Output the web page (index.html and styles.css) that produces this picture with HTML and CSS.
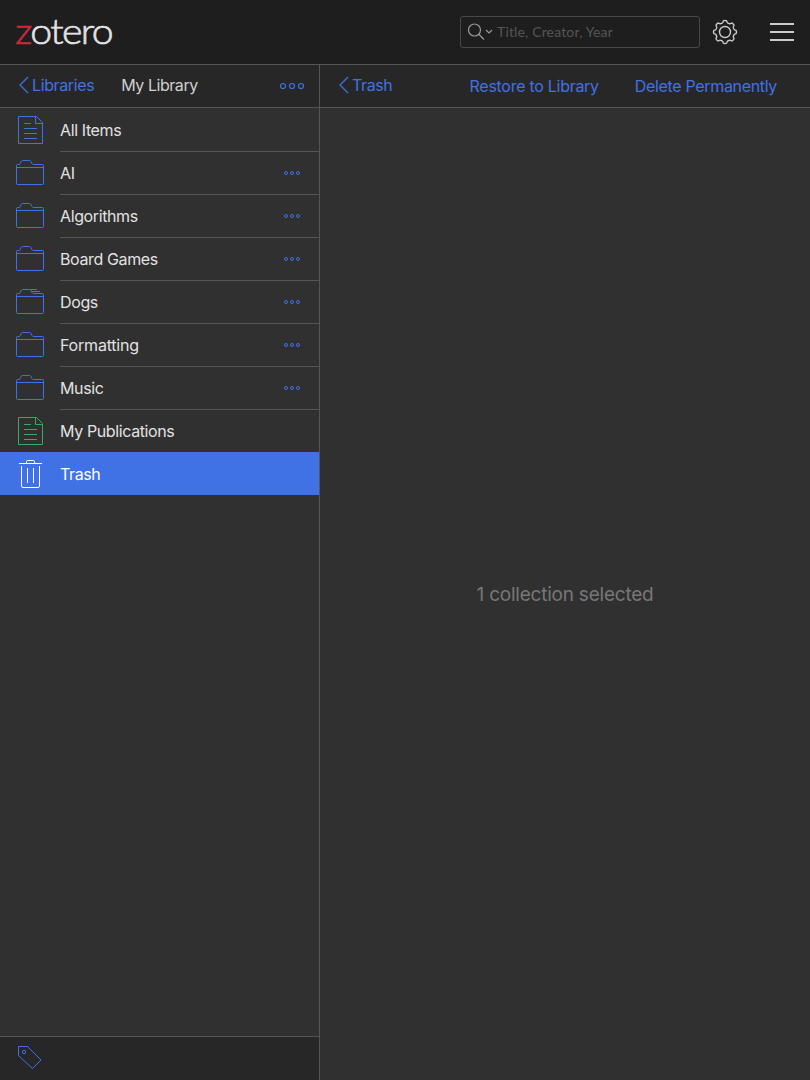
FILE: index.html
```html
<!DOCTYPE html>
<html lang="en">
<head>
<meta charset="utf-8">
<title>Zotero | Trash</title>
<link rel="stylesheet" href="styles.css">
</head>
<body>
<svg class="defs" width="0" height="0">
  <symbol id="doc" viewBox="0 0 28 28"><path d="M2.5.5h18l6 6v21h-24zM19.5.5v7h7M8 7.5h7M8 12.5h13M8 17.5h13M8 22.5h13"/></symbol>
  <symbol id="folder" viewBox="0 0 28 28"><path d="M.5 8.500h27M1.500 25.500Q.5 25.500 .5 24.500V6.500Q.5 5.500 1.500 5.500H3Q4 5.500 4.300 4.500L5 2.700Q5.500 1.500 6.500 1.500H13.500Q14.500 1.500 15 2.500L16 4.500Q16.500 5.500 17.500 5.500H26.500Q27.500 5.500 27.500 6.500V24.500Q27.500 25.500 26.500 25.500Z"/></symbol>
  <symbol id="folders" viewBox="0 0 28 28"><use href="#folder"/><path d="M14 1.500h7M16 3.500h8"/></symbol>
  <symbol id="trash" viewBox="0 0 28 28"><path d="M3 3.500h23M10.500 3V1.500Q10.500.5 11.500.5H17.500Q18.500.5 18.500 1.500V3M5.500 6V26Q5.500 27.500 7 27.500H22Q23.500 27.500 23.500 26V6M11.500 8v15M17.500 8v15"/></symbol>
  <symbol id="dots" viewBox="0 0 16 6"><circle cx="2" cy="3" r="1.500"/><circle cx="8" cy="3" r="1.500"/><circle cx="14" cy="3" r="1.500"/></symbol>
  <symbol id="back" viewBox="0 0 10 18"><path d="M9 1L1 9l8 8"/></symbol>
</svg>
<header class="navbar">
  <h1 class="brand"><span class="brand-z">z</span>otero</h1>
  <div class="search">
    <svg class="search-icon" width="25" height="18" viewBox="0 0 25 18"><circle cx="6.500" cy="7" r="6"/><path d="M11 11.500l5 5M18 7l3 3 3-3"/></svg>
    <span class="placeholder">Title, Creator, Year</span>
  </div>
  <svg class="gear" width="26" height="26" viewBox="-13 -13 26 26"><circle r="5.500"/><path id="gear-outline" d=""/></svg>
  <svg class="menu" width="24" height="18" viewBox="0 0 24 18"><path d="M0 1h24M0 9h24M0 17h24"/></svg>
</header>
<div class="columns">
  <aside class="sidebar">
    <div class="toolbar">
      <a class="back"><svg width="10" height="18"><use href="#back"/></svg><span>Libraries</span></a>
      <span class="title">My Library</span>
      <svg class="more" width="26" height="8" viewBox="0 0 26 8"><circle cx="4" cy="4" r="2.500"/><circle cx="13" cy="4" r="2.500"/><circle cx="22" cy="4" r="2.500"/></svg>
    </div>
    <ul class="tree">
      <li class="row"><svg class="icon"><use href="#doc"/></svg><div class="cell"><span>All Items</span></div></li>
      <li class="row"><svg class="icon"><use href="#folder"/></svg><div class="cell"><span>AI</span><svg class="dots"><use href="#dots"/></svg></div></li>
      <li class="row"><svg class="icon"><use href="#folder"/></svg><div class="cell"><span>Algorithms</span><svg class="dots"><use href="#dots"/></svg></div></li>
      <li class="row"><svg class="icon"><use href="#folder"/></svg><div class="cell"><span>Board Games</span><svg class="dots"><use href="#dots"/></svg></div></li>
      <li class="row"><svg class="icon"><use href="#folders"/></svg><div class="cell"><span>Dogs</span><svg class="dots"><use href="#dots"/></svg></div></li>
      <li class="row"><svg class="icon"><use href="#folder"/></svg><div class="cell"><span class="wide">Formatting</span><svg class="dots"><use href="#dots"/></svg></div></li>
      <li class="row"><svg class="icon"><use href="#folder"/></svg><div class="cell"><span>Music</span><svg class="dots"><use href="#dots"/></svg></div></li>
      <li class="row publications"><svg class="icon"><use href="#doc"/></svg><div class="cell"><span>My Publications</span></div></li>
      <li class="row selected"><svg class="icon"><use href="#trash"/></svg><div class="cell"><span>Trash</span></div></li>
    </ul>
    <footer class="tagbar"><svg width="26" height="26" viewBox="0 0 26 26"><path d="M1.500 1.500h9L24 15l-8.500 8.500L1.500 10.500z"/><circle cx="7" cy="7" r="1.700"/></svg></footer>
  </aside>
  <main class="content">
    <div class="toolbar">
      <a class="back"><svg width="10" height="18"><use href="#back"/></svg><span>Trash</span></a>
      <a class="action restore">Restore to Library</a>
      <a class="action delete">Delete Permanently</a>
    </div>
    <div class="message"><span>1 collection selected</span></div>
  </main>
</div>
<script src="gear.js"></script>
</body>
</html>
```
FILE: gear.js
```js
// Eight rounded teeth around the settings icon.
const points = [];
for (let i = 0; i <= 200; i++) {
  const a = (i / 200) * Math.PI * 2 - Math.PI / 2;
  const wave = Math.tanh(2 * Math.cos(8 * (a + Math.PI / 2)));
  const r = 10.400 + 1.100 * wave;
  points.push((r * Math.cos(a)).toFixed(2) + " " + (r * Math.sin(a)).toFixed(2));
}
document.getElementById("gear-outline").setAttribute("d", "M" + points.join("L") + "Z");
```
FILE: styles.css
```css
* { box-sizing: border-box; }
body {
  margin: 0;
  height: 1080px;
  display: flex;
  flex-direction: column;
  overflow: hidden;
  background: #303030;
  color: #e2e2e2;
  font: 16px/20px Inter, "Liberation Sans", sans-serif;
  letter-spacing: -0.38px;
}
svg { display: block; flex: none; fill: none; stroke: currentColor; }
.defs { display: none; }
.navbar {
  height: 65px;
  flex: none;
  display: flex;
  align-items: center;
  padding: 0 16px 1px 15px;
  background: #1e1e1e;
  border-bottom: 1px solid #555;
}
.brand {
  margin: 0;
  width: 100px;
  font: 300 35px/48px Lato, sans-serif;
  letter-spacing: -1.5px;
  color: #e2e2e2;
  padding-bottom: 4px;
  transform: scaleX(1.12);
  transform-origin: left;
  -webkit-text-stroke: 0.6px currentColor;
}
.brand-z { color: #cc2936; }
.search {
  width: 240px;
  height: 32px;
  margin-left: auto;
  display: flex;
  align-items: center;
  gap: 4px;
  padding-left: 7px;
  border: 1px solid #484848;
  border-radius: 3px;
}
.search-icon { color: #999; stroke-width: 1.2; }
.placeholder { font: 14px/20px Lato, sans-serif; letter-spacing: 0.16px; color: #555; }
.gear { margin-left: 12px; color: #ccc; stroke-width: 1.4; }
.menu { margin-left: 32px; color: #ccc; stroke-width: 2; }
.columns { flex: 1; display: flex; min-height: 0; }
.sidebar { width: 320px; flex: none; display: flex; flex-direction: column; border-right: 1px solid #555; }
.content { flex: 1; display: flex; flex-direction: column; }
.toolbar {
  height: 43px;
  flex: none;
  display: flex;
  align-items: center;
  padding: 0 14px 2px 19px;
  background: #272727;
  border-bottom: 1px solid #555;
}
.back { display: flex; align-items: center; gap: 3px; color: #4072e5; }
.back svg { stroke-width: 1.2; }
.title { margin-left: 27px; color: #d0d0d0; letter-spacing: -0.45px; }
.more { margin-left: auto; margin-top: 2px; color: #4072e5; stroke-width: 1.2; }
.content .toolbar { padding-right: 33px; }
.action { color: #4072e5; padding-top: 2px; letter-spacing: -0.33px; }
.restore { margin-left: auto; letter-spacing: -0.28px; }
.delete { margin-left: 36px; }
.tree { list-style: none; margin: 0; padding: 0; flex: 1; }
.row { height: 43px; display: flex; align-items: center; padding-left: 16px; }
.icon { width: 28px; height: 28px; color: #4072e5; }
.cell {
  flex: 1;
  height: 43px;
  margin-left: 16px;
  padding: 1px 18px 0 0;
  display: flex;
  align-items: center;
  justify-content: space-between;
}
.row + .row .cell { border-top: 1px solid #555; padding-top: 0; }
.wide { letter-spacing: -0.2px; }
.dots { width: 18px; height: 6px; color: #4072e5; }
.publications .icon { color: #39a862; }
.row.selected { background: #4072e5; color: #fff; }
.row.selected .icon { color: #fff; }
.row.row.selected .cell { border-color: transparent; }
.tagbar { height: 44px; display: flex; align-items: center; padding: 0 0 2px 17px; background: #272727; border-top: 1px solid #555; color: #4072e5; }
.message { flex: 1; display: flex; align-items: center; justify-content: center; padding-top: 2px; color: #777; font-size: 19px; letter-spacing: -0.22px; }
```
